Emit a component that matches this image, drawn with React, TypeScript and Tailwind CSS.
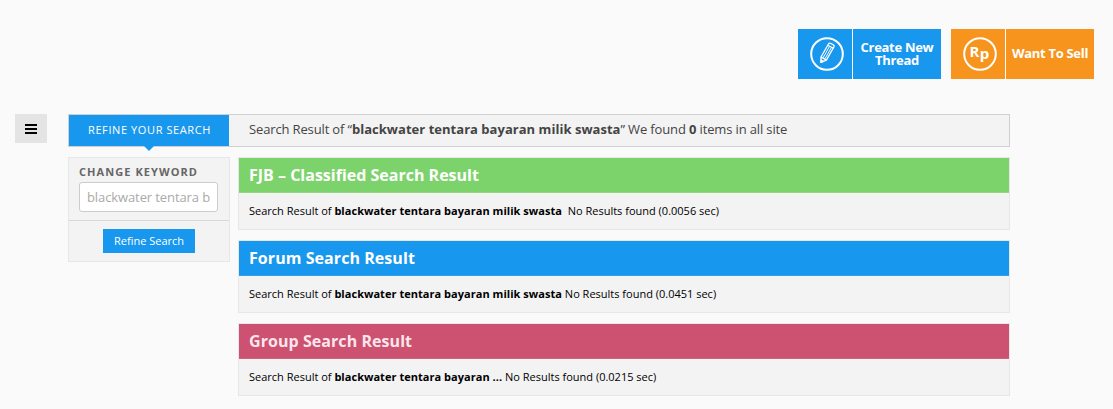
import type { ReactNode } from "react";

function PencilIcon() {
  return (
    <svg width="34" height="34" viewBox="0 0 34 34" fill="none" stroke="#fff">
      <circle cx="17" cy="17" r="15.8" strokeWidth="2" />
      <g strokeWidth="1.3" strokeLinejoin="round">
        <path d="M18.6 6.8 Q19.3 5.8 20.4 6.3 L23.4 7.9 Q24.6 8.6 24 9.7 L16.4 23.1 L11 25.4 L11 20 Z" />
        <path d="M17.8 8.2 L23.3 11.2 M11 20 L16.4 23.1" />
        <path d="M19.4 9.6 L13 20.8 M21.4 10.6 L14.9 21.9" strokeWidth="1" />
        <path d="M11 25.4 L11 23 L13.3 24.4 Z" fill="#fff" />
      </g>
    </svg>
  );
}

function RupiahIcon() {
  return (
    <svg width="34" height="34" viewBox="0 0 34 34">
      <circle cx="17" cy="17" r="15.8" fill="none" stroke="#fff" strokeWidth="2" />
      <text x="6.4" y="20" fill="#fff" fontFamily="Open Sans, sans-serif" fontWeight="700" fontSize="15">R</text>
      <text x="16.7" y="22" fill="#fff" fontFamily="Open Sans, sans-serif" fontWeight="700" fontSize="15">p</text>
    </svg>
  );
}

function ActionButton({ icon, color, children }: { icon: ReactNode; color: string; children: ReactNode }) {
  return (
    <button className={`flex h-[50px] w-[143px] ${color}`}>
      <span className="flex h-full w-[55px] shrink-0 items-center border-r border-white pl-3">{icon}</span>
      <span className="flex h-full flex-1 items-center justify-center pb-px text-center text-[13px] leading-[13px] font-bold tracking-[-0.3px] whitespace-nowrap text-white">
        {children}
      </span>
    </button>
  );
}

type ResultProps = { title: string; color: string; keyword: string; gap?: string; time: string };

function ResultCard({ title, color, keyword, gap = " ", time }: ResultProps) {
  return (
    <section className="h-[73px] border border-[#e7e7e7] bg-[#f3f3f3]">
      <h2 className={`h-[35px] border-b pl-2.5 text-[16px] leading-[34px] font-bold ${color}`}>{title}</h2>
      <p className="pl-2.5 text-[11px] leading-[36px] whitespace-pre text-black">
        Search Result of <b className="tracking-[0.035px]">{keyword}</b>{gap}No Results found ({time} sec)
      </p>
    </section>
  );
}

export default function App() {
  return (
    <div className="h-[409px] w-[1113px] overflow-hidden bg-[#fafafa] pt-[29px] font-['Open_Sans',sans-serif]">
      <header className="flex justify-end gap-2.5 pr-[19px]">
        <ActionButton icon={<PencilIcon />} color="bg-[#1797ee]"><span className="pt-px">Create New<br />Thread</span></ActionButton>
        <ActionButton icon={<RupiahIcon />} color="bg-[#f7941d]">Want To Sell</ActionButton>
      </header>
      <div className="mt-[35px] flex pl-[15px]">
        <button aria-label="Menu" className="mr-[21px] flex h-[29px] w-8 flex-col items-center justify-center gap-[2px] bg-[#e4e4e4]">
          <span className="h-[2px] w-[12px] bg-black" />
          <span className="h-[2px] w-[12px] bg-black" />
          <span className="h-[2px] w-[12px] bg-black" />
        </button>
        <main className="w-[942px]">
          <div className="flex h-[33px] border border-[#d0d0d0] bg-[#f3f3f3]">
            <div className="relative w-40 bg-[#1797ee] pl-[19px] text-[11px] leading-[30px] tracking-[0.6px] whitespace-nowrap text-white">
              REFINE YOUR SEARCH
              <svg className="absolute top-[31px] left-[75px]" width="10" height="5" viewBox="0 0 10 5">
                <path d="M0 0H10L5 5Z" fill="#1797ee" />
              </svg>
            </div>
            <p className="pl-5 text-[13px] leading-[28px] tracking-[-0.14px] whitespace-nowrap text-[#444]">
              Search Result of “<b className="tracking-[0.03px]">blackwater tentara bayaran milik swasta</b>” We found <b>0</b> items in all site
            </p>
          </div>
          <div className="mt-2.5 flex items-start gap-2">
            <aside className="h-[105px] w-[162px] border border-[#e7e7e7] bg-[#f3f3f3]">
              <div className="h-[63px] border-b border-[#d8d8d8] px-2.5 pt-1">
                <label htmlFor="keyword" className="block h-5 text-[11px] leading-[20px] font-bold tracking-[1.07px] whitespace-nowrap text-[#666]">
                  CHANGE KEYWORD
                </label>
                <div className="flex h-[30px] w-[139px] rounded-[3px] border border-[#ccc] bg-white px-[7px] pt-px">
                  <input id="keyword" readOnly value="blackwater tentara b" className="w-full min-w-0 bg-transparent text-[13px] tracking-[-0.1px] text-[#aaa] outline-none" />
                </div>
              </div>
              <button className="mx-auto mt-2 block h-6 w-[92px] bg-[#1797ee] text-[11px] leading-6 text-white">Refine Search</button>
            </aside>
            <div className="flex w-[772px] flex-col gap-2.5">
              <ResultCard title="FJB – Classified Search Result" color="bg-[#7dd36b] border-[#8fd97f] text-white" keyword="blackwater tentara bayaran milik swasta" gap="  " time="0.0056" />
              <ResultCard title="Forum Search Result" color="bg-[#1797ee] border-[#309ff0] text-white tracking-[0.06px]" keyword="blackwater tentara bayaran milik swasta" time="0.0451" />
              <ResultCard title="Group Search Result" color="bg-[#cd5170] border-[#d4607e] text-[#fce6ec] tracking-[0.06px]" keyword="blackwater tentara bayaran ..." time="0.0215" />
            </div>
          </div>
        </main>
      </div>
    </div>
  );
}
